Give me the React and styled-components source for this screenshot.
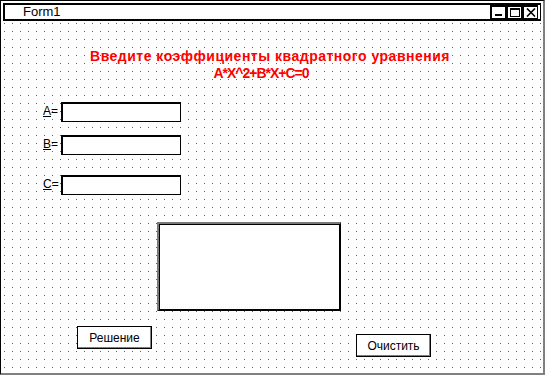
import React from "react";
import styled, { createGlobalStyle } from "styled-components";

const GlobalStyle = createGlobalStyle`
  html, body {
    margin: 0;
    padding: 0;
    background: #ffffff;
  }
  body {
    font-family: "Liberation Sans", Arial, sans-serif;
  }
`;

const Window = styled.div`
  box-sizing: border-box;
  width: 545px;
  height: 375px;
  display: flex;
  flex-direction: column;
  background: #ffffff;
  border-left: 1px solid #000;
  border-top: 1px solid #000;
  border-right: 2px solid #808080;
  border-bottom: 2px solid #808080;
`;

const TitleBar = styled.div`
  box-sizing: border-box;
  height: 18px;
  margin: 2px 2px 0 2px;
  display: flex;
  align-items: center;
  border: 2px solid #000;
  border-right-width: 1px;
  padding-left: 18px;
  padding-right: 2px;
`;

const TitleText = styled.span`
  flex: 1;
  font-size: 13px;
  color: #000;
  line-height: 14px;
`;

const TitleButton = styled.div`
  box-sizing: border-box;
  width: 16px;
  height: 14px;
  border: 1px solid #000;
  border-left-width: 2px;
  border-top-width: 2px;
  display: flex;
  align-items: center;
  justify-content: center;
  background: #fff;
`;

const Canvas = styled.div`
  flex: 1;
  display: flex;
  flex-direction: column;
  background-image: conic-gradient(at 1px 1px, transparent 75%, #6a6a2c 0);
  background-size: 8px 8px;
  background-position: 3px 2px;
`;

const Heading = styled.div`
  margin: 27px 0 0 82px;
  width: 374px;
  text-align: center;
  color: #ff0000;
  font-weight: bold;
  font-size: 14px;
  line-height: 17px;
`;

const HeadingLine = styled.div`
  letter-spacing: ${({ $spacing }) => $spacing}px;
  padding-right: ${({ $shift }) => $shift || 0}px;
`;

const FieldRow = styled.div`
  display: flex;
  align-items: center;
  margin-top: ${({ $gap }) => $gap}px;
  padding-left: 42px;
`;

const Label = styled.label`
  width: 18px;
  padding-bottom: 3px;
  font-size: 12px;
  color: #000;
`;

const Hot = styled.span`
  text-decoration: underline;
`;

const Input = styled.div`
  box-sizing: border-box;
  width: 120px;
  height: 20px;
  background: #fff;
  border: 1px solid #000;
  border-left-width: 2px;
  border-top-width: 2px;
`;

const Memo = styled.div`
  box-sizing: border-box;
  width: 184px;
  height: 89px;
  margin: 27px 0 0 156px;
  background: #fff;
  border: 1px solid #000;
  border-top: 2px solid #7a7a7a;
  border-left: 2px solid #7a7a7a;
  box-shadow: inset 1px 1px 0 #000, inset -1px -1px 0 #000;
`;

const ButtonRow = styled.div`
  display: flex;
  align-items: flex-start;
  margin-top: 15px;
  padding-left: 76px;
  gap: 204px;
`;

const Button = styled.div`
  box-sizing: border-box;
  width: 75px;
  height: 23px;
  margin-top: ${({ $drop }) => $drop || 0}px;
  display: flex;
  align-items: center;
  justify-content: center;
  background: #fff;
  border: 1px solid #000;
  box-shadow: inset -1px -1px 0 #808080;
  font-size: 12px;
  color: #000;
`;

const fields = [
  { key: "A", gap: 20 },
  { key: "B", gap: 13 },
  { key: "C", gap: 20 },
];

const App = () => {
  return (
    <>
      <GlobalStyle />
      <Window>
        <TitleBar>
          <TitleText>Form1</TitleText>
          <TitleButton>
            <svg width="10" height="9" viewBox="0 0 10 9">
              <rect x="1" y="6" width="7" height="2" fill="#000" />
            </svg>
          </TitleButton>
          <TitleButton>
            <svg width="10" height="9" viewBox="0 0 10 9">
              <rect x="0.5" y="0.5" width="9" height="8" fill="none" stroke="#000" />
              <rect x="0" y="0" width="10" height="2" fill="#000" />
            </svg>
          </TitleButton>
          <TitleButton>
            <svg width="10" height="9" viewBox="0 0 10 9">
              <path d="M1 0.5 L9 8.5 M9 0.5 L1 8.5" stroke="#000" strokeWidth="1.6" />
            </svg>
          </TitleButton>
        </TitleBar>
        <Canvas>
          <Heading>
            <HeadingLine $spacing={0.5}>
              Введите коэффициенты квадратного уравнения
            </HeadingLine>
            <HeadingLine $spacing={-1} $shift={18}>
              A*X^2+B*X+C=0
            </HeadingLine>
          </Heading>
          {fields.map((f) => (
            <FieldRow key={f.key} $gap={f.gap}>
              <Label>
                <Hot>{f.key}</Hot>=
              </Label>
              <Input />
            </FieldRow>
          ))}
          <Memo />
          <ButtonRow>
            <Button>Решение</Button>
            <Button $drop={8}>Очистить</Button>
          </ButtonRow>
        </Canvas>
      </Window>
    </>
  );
};

export default App;
